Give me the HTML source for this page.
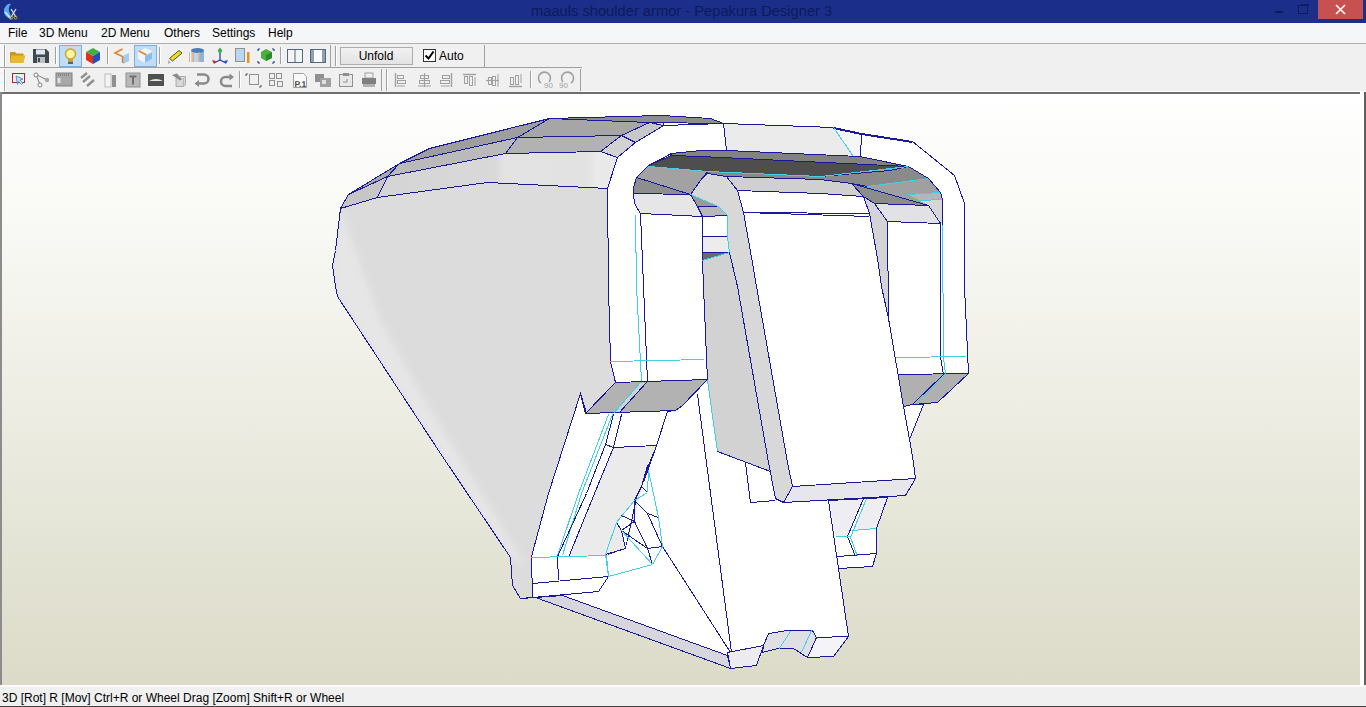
<!DOCTYPE html>
<html><head><meta charset="utf-8">
<style>
*{margin:0;padding:0;box-sizing:border-box}
html,body{width:1366px;height:707px;overflow:hidden;background:#f0f0f0;font-family:"Liberation Sans",sans-serif;font-size:12px;color:#000}
.abs{position:absolute}
#title{left:0;top:0;width:1366px;height:23px;background:#1b2e8a}
#title .t{left:531px;top:3px;color:#0d1a5c;font-size:14.7px;white-space:nowrap}
#menu{left:0;top:23px;width:1366px;height:20px;background:#f5f6f7}
#menu span{position:absolute;top:3px;white-space:nowrap}
#tb1{left:0;top:43px;width:486px;height:24px;background:#f0f0f0}
#tb2{left:0;top:67px;width:582px;height:25px;background:#f0f0f0}
#canvas{left:0;top:91px;width:1366px;height:596px;background:linear-gradient(#ffffff 0%,#f6f6f1 30%,#e6e6d9 70%,#dcdbc8 100%)}
#status{left:0;top:687px;width:1366px;height:20px;background:#f0f0f0;border-bottom:1px solid #404040}
#status span{position:absolute;left:2px;top:4px;white-space:nowrap}
svg{position:absolute;left:0;top:0}
#title svg{position:absolute}
</style></head><body>
<div id="title" class="abs"><div class="t abs">maauls shoulder armor - Pepakura Designer 3</div>
<svg width="22" height="22" style="left:0;top:0" shape-rendering="auto"><path d="M4 9 q3 -6 7 -5 q-3 3 -2 7 q2 4 2 8 q-5 -1 -7 -6z" fill="#58a8f0"/><path d="M5 12 q3 3 6 7" stroke="#d8ecff" stroke-width="1.5" fill="none"/><path d="M11 9 l5 8 M16 9 l-5 8" stroke="#e0e8f0" stroke-width="1.2"/><circle cx="11.5" cy="17.5" r="1.5" fill="none" stroke="#b0a040"/><circle cx="15.5" cy="17.5" r="1.5" fill="none" stroke="#b0a040"/></svg>
<svg width="60" height="22" style="left:1270px;top:0" shape-rendering="crispEdges"><rect x="5" y="11" width="8" height="2" fill="#0c1a60"/><rect x="28.5" y="5.5" width="9" height="8" fill="none" stroke="#0c1a60" stroke-width="1.5"/><rect x="31" y="3.5" width="8" height="2" fill="#0c1a60"/></svg>
<div class="abs" style="left:1318px;top:0;width:45px;height:19px;background:#c75050"></div>
<svg width="45" height="19" style="left:1318px;top:0" shape-rendering="auto"><path d="M18 5 l9 9 M27 5 l-9 9" stroke="#fff" stroke-width="1.6"/></svg>
</div>
<div id="menu" class="abs">
<span style="left:8px">File</span><span style="left:39px">3D Menu</span><span style="left:101px">2D Menu</span><span style="left:164px">Others</span><span style="left:212px">Settings</span><span style="left:268px">Help</span>
</div>
<div id="canvas" class="abs"></div>
<div class="abs" style="left:0;top:92px;width:1366px;height:2px;background:#6e6e6e"></div>
<div class="abs" style="left:0;top:92px;width:2px;height:595px;background:#8c8c8c"></div>
<div class="abs" style="left:1360px;top:92px;width:6px;height:595px;background:#ffffff;border-right:2px solid #606060"></div>
<div class="abs" style="left:0;top:685px;width:1366px;height:2px;background:#fcfcfc"></div>
<svg width="1366" height="707" viewBox="0 0 1366 707" shape-rendering="crispEdges" stroke-width="1">
<defs>
<linearGradient id="gf5" gradientUnits="userSpaceOnUse" x1="377" y1="0" x2="618" y2="0"><stop offset="0" stop-color="#d4d4d4"/><stop offset="0.49" stop-color="#d9d9d9"/><stop offset="0.53" stop-color="#e3e3e3"/><stop offset="0.87" stop-color="#e2e2e2"/><stop offset="0.91" stop-color="#eaeaea"/><stop offset="1" stop-color="#e8e8e8"/></linearGradient>
<filter id="blur" x="-20%" y="-20%" width="140%" height="140%"><feGaussianBlur stdDeviation="3.5"/></filter>
<clipPath id="shclip"><polygon points="340,208.5 348.7,194.1 399.7,163.6 429.6,148.7 549.2,118.9 661.7,115.9 663.4,125.6 617.8,157.2 607.4,188 608.75,286 610,361 615,382.25 586.25,413.5 580,393.5 560,462.25 531.25,556.25 532.5,597.5 520,598.75 512.5,585 510,557.5 440,453.75 337.5,296 335,286 332.5,265 335,250"/></clipPath>
</defs>
<polygon points="340.5,208.5 348.5,194.5 399.5,163.5 429.5,148.5 549.5,118.5 661.5,115.5 663.5,125.5 617.5,157.5 607.5,188.5 608.5,286.5 610.5,361.5 615.5,382.5 586.5,413.5 580.5,393.5 560.5,462.5 531.5,556.5 532.5,597.5 520.5,598.5 512.5,585.5 510.5,557.5 440.5,453.5 337.5,296.5 335.5,286.5 332.5,265.5 335.5,250.5" fill="#dcdcdc" stroke="#18189c"/>
<g clip-path="url(#shclip)"><polygon points="340.5,208.5 341.5,210.5 378.5,316.5 415.5,384.5 525.5,565.5 510.5,557.5 440.5,453.5 337.5,296.5 335.5,286.5 332.5,265.5 335.5,250.5" fill="#e6e6e7" filter="url(#blur)"/></g>
<polygon points="348.5,194.5 399.5,163.5 387.5,176.5" fill="#a9a9a9" stroke="#18189c"/>
<polygon points="340.5,208.5 348.5,194.5 387.5,176.5 377.5,197.5" fill="#c6c6c6" stroke="#18189c"/>
<polygon points="399.5,163.5 429.5,148.5 549.5,118.5 517.5,137.5" fill="#9e9e9e" stroke="#18189c"/>
<polygon points="387.5,176.5 399.5,163.5 517.5,137.5 505.5,153.5" fill="#bababa" stroke="#18189c"/>
<polygon points="377.5,197.5 387.5,176.5 505.5,153.5 600.5,151.5 617.5,157.5 607.5,188.5 487.5,182.5" fill="url(#gf5)" stroke="#18189c"/>
<polygon points="549.5,118.5 661.5,115.5 710.5,118.5 723.5,123.5 649.5,122.5" fill="#8e8e8e" stroke="#18189c"/>
<polygon points="549.5,118.5 649.5,122.5 621.5,135.5 517.5,137.5" fill="#a6a6a6" stroke="#18189c"/>
<polygon points="517.5,137.5 621.5,135.5 600.5,151.5 505.5,153.5" fill="#b2b2b2" stroke="#18189c"/>
<polygon points="649.5,122.5 663.5,125.5 635.5,142.5 621.5,135.5" fill="#c8c8c8" stroke="#18189c"/>
<polygon points="621.5,135.5 635.5,142.5 617.5,157.5 600.5,151.5" fill="#d2d2d2" stroke="#18189c"/>
<polygon points="615.5,382.5 610.5,361.5 608.5,286.5 607.5,188.5 617.5,157.5 635.5,142.5 663.5,125.5 723.5,123.5 833.5,127.5 861.5,133.5 912.5,141.5 954.5,175.5 964.5,203.5 964.5,286.5 968.5,373.5 943.5,374.5 940.5,357.5 940.5,223.5 942.5,208.5 942.5,199.5 940.5,192.5 928.5,178.5 908.5,166.5 859.5,156.5 726.5,150.5 700.5,150.5 671.5,153.5 648.5,165.5 636.5,177.5 633.5,187.5 633.5,193.5 640.5,213.5 647.5,381.5" fill="#ffffff" stroke="#18189c"/>
<polygon points="723.5,123.5 833.5,127.5 853.5,156.5 726.5,150.5" fill="#ebebeb" stroke="#18189c"/>
<polygon points="833.5,127.5 861.5,133.5 860.5,156.5 853.5,156.5" fill="#f6f6f6" stroke="#18189c"/>
<polygon points="671.5,153.5 700.5,150.5 726.5,150.5 859.5,156.5 908.5,166.5 700.5,156.5 671.5,155.5" fill="#828282" stroke="#18189c"/>
<polygon points="648.5,165.5 671.5,155.5 700.5,156.5 908.5,166.5 820.5,176.5 707.5,171.5 649.5,166.5" fill="#4e4e4e" stroke="#18189c"/>
<polygon points="636.5,177.5 648.5,165.5 649.5,166.5 707.5,171.5 700.5,180.5 690.5,194.5" fill="#a2a2a2" stroke="#18189c"/>
<polygon points="633.5,187.5 636.5,177.5 690.5,194.5 633.5,193.5" fill="#8e8e8e" stroke="#18189c"/>
<polygon points="633.5,193.5 690.5,194.5 697.5,206.5 702.5,216.5 640.5,213.5 634.5,203.5" fill="#e6e6e6" stroke="#18189c"/>
<polygon points="707.5,171.5 820.5,176.5 908.5,166.5 928.5,178.5 940.5,192.5 942.5,199.5 942.5,224.5 928.5,205.5 874.5,203.5 863.5,196.5 851.5,183.5 820.5,179.5 726.5,176.5 707.5,173.5" fill="#a0a0a0" stroke="none"/>
<polygon points="707.5,171.5 820.5,176.5 889.5,170.5 908.5,166.5 928.5,178.5 867.5,186.5 851.5,183.5 820.5,179.5 726.5,176.5 707.5,173.5" fill="#8a8a8a" stroke="#18189c"/>
<polygon points="867.5,186.5 928.5,178.5 940.5,192.5 907.5,194.5" fill="#a0a0a0" stroke="none"/>
<polygon points="907.5,194.5 940.5,192.5 942.5,199.5 919.5,200.5" fill="#b6b6b6" stroke="none"/>
<polygon points="919.5,200.5 942.5,199.5 942.5,224.5 928.5,205.5" fill="#d6d6d6" stroke="none"/>
<polygon points="851.5,183.5 928.5,205.5 874.5,203.5 863.5,196.5" fill="#8c8c8c" stroke="#18189c"/>
<polygon points="874.5,203.5 928.5,205.5 940.5,223.5 887.5,221.5" fill="#e2e2e6" stroke="#18189c"/>
<polygon points="726.5,176.5 820.5,179.5 851.5,183.5 863.5,196.5 820.5,193.5 737.5,190.5" fill="#d0d0d0" stroke="#18189c"/>
<polygon points="737.5,190.5 820.5,193.5 863.5,196.5 869.5,213.5 743.5,212.5" fill="#ffffff" stroke="#18189c"/>
<polygon points="863.5,196.5 874.5,203.5 887.5,221.5 888.5,318.5 881.5,286.5 877.5,258.5 869.5,213.5" fill="#d4d4d4" stroke="#18189c"/>
<polygon points="887.5,221.5 940.5,223.5 940.5,357.5 943.5,374.5 897.5,374.5 888.5,318.5" fill="#ffffff" stroke="#18189c"/>
<polygon points="897.5,374.5 968.5,373.5 937.5,402.5 912.5,404.5 903.5,406.5" fill="#b0b0b0" stroke="#18189c"/>
<polygon points="903.5,406.5 912.5,404.5 923.5,404.5 909.5,439.5" fill="#ffffff" stroke="#18189c"/>
<polygon points="640.5,213.5 702.5,216.5 707.5,380.5 647.5,381.5" fill="#ffffff" stroke="#18189c"/>
<polygon points="615.5,382.5 707.5,379.5 682.5,405.5 675.5,410.5 585.5,413.5" fill="#b2b2b2" stroke="#18189c"/>
<polygon points="640.5,382.5 646.5,382.5 618.5,413.5 613.5,413.5" fill="#d2d2d2" stroke="none"/>
<polygon points="690.5,194.5 718.5,206.5 697.5,206.5" fill="#9a9a9a" stroke="#18189c"/>
<polygon points="697.5,206.5 718.5,206.5 727.5,215.5 702.5,216.5" fill="#b8b8b8" stroke="#18189c"/>
<polygon points="702.5,216.5 727.5,215.5 727.5,236.5 702.5,236.5" fill="#ffffff" stroke="#18189c"/>
<polygon points="702.5,236.5 727.5,236.5 729.5,252.5 702.5,252.5" fill="#ececec" stroke="#18189c"/>
<polygon points="702.5,252.5 729.5,252.5 702.5,260.5" fill="#6a6a6a" stroke="#18189c"/>
<polygon points="702.5,260.5 729.5,252.5 737.5,286.5 768.5,462.5 770.5,471.5 717.5,451.5 707.5,380.5 703.5,286.5" fill="#d2d2d2" stroke="#18189c"/>
<polygon points="585.5,413.5 675.5,410.5 667.5,411.5 656.5,445.5 637.5,493.5 625.5,548.5 606.5,555.5 608.5,576.5 598.5,591.5 532.5,597.5 531.5,556.5 548.5,493.5 580.5,393.5" fill="#ffffff" stroke="#18189c"/>
<polygon points="613.5,447.5 656.5,445.5 647.5,465.5 641.5,486.5 634.5,500.5 616.5,522.5 621.5,530.5 625.5,548.5 605.5,554.5 568.5,557.5 594.5,493.5" fill="#ebebeb" stroke="none"/>
<polygon points="676.5,411.5 707.5,380.5 717.5,451.5 770.5,471.5 775.5,500.5 783.5,502.5 828.5,500.5 848.5,636.5 833.5,656.5 807.5,657.5 793.5,648.5 777.5,648.5 762.5,652.5 756.5,665.5 730.5,668.5 560.5,607.5 535.5,597.5 598.5,591.5 608.5,576.5 606.5,555.5 625.5,548.5 643.5,482.5 656.5,445.5 667.5,411.5" fill="#ffffff" stroke="none"/>
<polygon points="535.5,597.5 562.5,595.5 727.5,655.5 730.5,668.5" fill="#d6d6dc" stroke="#18189c"/>
<polygon points="727.5,652.5 763.5,645.5 756.5,665.5 730.5,668.5" fill="#ececf0" stroke="#18189c"/>
<polygon points="763.5,645.5 768.5,633.5 787.5,630.5 812.5,630.5 816.5,637.5 807.5,657.5 793.5,648.5 777.5,648.5 762.5,652.5" fill="#e0e0e4" stroke="#18189c"/>
<polygon points="816.5,637.5 848.5,636.5 833.5,656.5 807.5,657.5" fill="#f4f4f8" stroke="#18189c"/>
<polygon points="828.5,500.5 887.5,497.5 876.5,528.5 876.5,553.5 872.5,566.5 838.5,568.5" fill="#ffffff" stroke="#18189c"/>
<polygon points="829.5,500.5 863.5,498.5 847.5,536.5 835.5,536.5" fill="#eeeef2" stroke="none"/>
<polygon points="866.5,498.5 887.5,497.5 876.5,528.5 852.5,530.5" fill="#eeeef2" stroke="none"/>
<polygon points="690.5,194.5 700.5,180.5 707.5,173.5 726.5,176.5 737.5,190.5 743.5,212.5 753.5,268.5 756.5,286.5 787.5,462.5 792.5,486.5 783.5,502.5 775.5,498.5 768.5,462.5 737.5,286.5 729.5,252.5 727.5,236.5 727.5,215.5 718.5,206.5" fill="#d8d8d8" stroke="#18189c"/>
<polygon points="743.5,212.5 869.5,213.5 877.5,258.5 881.5,286.5 888.5,318.5 903.5,406.5 909.5,439.5 913.5,462.5 915.5,478.5 792.5,486.5 787.5,462.5 756.5,286.5 753.5,268.5" fill="#ffffff" stroke="#18189c"/>
<polygon points="792.5,486.5 915.5,478.5 905.5,495.5 783.5,502.5" fill="#e6e6ec" stroke="#18189c"/>
<polyline points="340.5,208.5 348.5,194.5 399.5,163.5 429.5,148.5 549.5,118.5 549.5,118.5" fill="none" stroke="#18189c"/>
<polyline points="340.5,208.5 335.5,250.5 332.5,265.5 335.5,286.5 337.5,296.5 440.5,453.5 510.5,557.5 512.5,585.5 520.5,598.5 535.5,597.5" fill="none" stroke="#18189c"/>
<polyline points="833.5,128.5 861.5,134.5 912.5,142.5" fill="none" stroke="#18189c"/>
<polyline points="833.5,127.5 853.5,156.5" fill="none" stroke="#40d0e6"/>
<polyline points="649.5,166.5 707.5,171.5 820.5,176.5 908.5,166.5" fill="none" stroke="#40d0e6"/>
<polyline points="867.5,186.5 928.5,178.5" fill="none" stroke="#40d0e6"/>
<polyline points="907.5,194.5 940.5,192.5" fill="none" stroke="#40d0e6"/>
<polyline points="919.5,200.5 942.5,199.5" fill="none" stroke="#40d0e6"/>
<polyline points="928.5,178.5 940.5,192.5 942.5,199.5 942.5,224.5" fill="none" stroke="#18189c"/>
<polyline points="743.5,212.5 869.5,216.5" fill="none" stroke="#18189c"/>
<polyline points="942.5,225.5 943.5,357.5 945.5,374.5" fill="none" stroke="#40d0e6"/>
<polyline points="943.5,374.5 912.5,404.5" fill="none" stroke="#18189c"/>
<polyline points="945.5,374.5 915.5,404.5" fill="none" stroke="#40d0e6"/>
<polyline points="896.5,357.5 966.5,356.5" fill="none" stroke="#40d0e6"/>
<polyline points="909.5,439.5 913.5,462.5" fill="none" stroke="#18189c"/>
<polyline points="635.5,215.5 636.5,286.5 641.5,381.5" fill="none" stroke="#40d0e6"/>
<polyline points="634.5,203.5 640.5,213.5" fill="none" stroke="#18189c"/>
<polyline points="610.5,361.5 704.5,359.5" fill="none" stroke="#40d0e6"/>
<polyline points="646.5,382.5 618.5,413.5" fill="none" stroke="#18189c"/>
<polyline points="640.5,382.5 613.5,413.5" fill="none" stroke="#40d0e6"/>
<polyline points="702.5,260.5 729.5,252.5" fill="none" stroke="#40d0e6"/>
<polyline points="690.5,194.5 718.5,206.5 727.5,215.5 727.5,236.5 729.5,252.5" fill="none" stroke="#40d0e6"/>
<polyline points="707.5,380.5 717.5,451.5" fill="none" stroke="#40d0e6"/>
<polyline points="580.5,393.5 548.5,493.5 531.5,556.5 532.5,597.5" fill="none" stroke="#18189c"/>
<polyline points="608.5,414.5 578.5,493.5 557.5,555.5" fill="none" stroke="#40d0e6"/>
<polyline points="612.5,414.5 581.5,493.5 562.5,555.5" fill="none" stroke="#40d0e6"/>
<polyline points="613.5,414.5 605.5,444.5 586.5,493.5 557.5,556.5 558.5,580.5" fill="none" stroke="#18189c"/>
<polyline points="621.5,414.5 613.5,447.5 594.5,493.5 568.5,557.5" fill="none" stroke="#18189c"/>
<polyline points="605.5,444.5 613.5,447.5 656.5,445.5" fill="none" stroke="#18189c"/>
<polyline points="667.5,411.5 656.5,445.5 643.5,482.5" fill="none" stroke="#18189c"/>
<polyline points="531.5,557.5 606.5,555.5 608.5,576.5" fill="none" stroke="#40d0e6"/>
<polyline points="532.5,583.5 608.5,576.5" fill="none" stroke="#18189c"/>
<polyline points="532.5,597.5 598.5,591.5 608.5,576.5" fill="none" stroke="#18189c"/>
<polyline points="697.5,394.5 731.5,652.5" fill="none" stroke="#18189c"/>
<polyline points="662.5,546.5 730.5,652.5" fill="none" stroke="#18189c"/>
<polyline points="745.5,462.5 750.5,502.5 775.5,500.5" fill="none" stroke="#18189c"/>
<polyline points="717.5,451.5 770.5,471.5" fill="none" stroke="#18189c"/>
<polyline points="790.5,631.5 778.5,649.5" fill="none" stroke="#40d0e6"/>
<polyline points="811.5,630.5 801.5,652.5" fill="none" stroke="#40d0e6"/>
<polyline points="828.5,500.5 848.5,636.5" fill="none" stroke="#18189c"/>
<polyline points="647.5,465.5 641.5,486.5 634.5,500.5 634.5,521.5" fill="none" stroke="#18189c"/>
<polyline points="641.5,486.5 647.5,492.5" fill="none" stroke="#18189c"/>
<polyline points="634.5,500.5 647.5,513.5 662.5,546.5" fill="none" stroke="#18189c"/>
<polyline points="647.5,513.5 658.5,517.5" fill="none" stroke="#18189c"/>
<polyline points="621.5,515.5 634.5,521.5 621.5,530.5" fill="none" stroke="#18189c"/>
<polyline points="616.5,522.5 621.5,530.5 625.5,548.5 605.5,554.5" fill="none" stroke="#18189c"/>
<polyline points="621.5,530.5 647.5,548.5" fill="none" stroke="#18189c"/>
<polyline points="634.5,521.5 647.5,548.5 662.5,546.5" fill="none" stroke="#18189c"/>
<polyline points="647.5,548.5 652.5,564.5" fill="none" stroke="#18189c"/>
<polyline points="648.5,470.5 658.5,517.5 662.5,546.5 652.5,564.5 608.5,576.5 605.5,554.5 616.5,522.5 634.5,500.5 647.5,492.5 648.5,470.5" fill="none" stroke="#40d0e6"/>
<polyline points="621.5,530.5 652.5,564.5" fill="none" stroke="#40d0e6"/>
<polyline points="863.5,498.5 847.5,536.5 855.5,556.5" fill="none" stroke="#18189c"/>
<polyline points="866.5,498.5 850.5,537.5 857.5,556.5" fill="none" stroke="#40d0e6"/>
<polyline points="835.5,536.5 850.5,536.5" fill="none" stroke="#40d0e6"/>
<polyline points="852.5,530.5 876.5,528.5" fill="none" stroke="#40d0e6"/>
<polyline points="837.5,556.5 876.5,553.5" fill="none" stroke="#18189c"/>
<polyline points="828.5,500.5 887.5,497.5 876.5,528.5 876.5,553.5 872.5,566.5 838.5,568.5" fill="none" stroke="#18189c"/>
<polyline points="903.5,406.5 912.5,404.5" fill="none" stroke="#18189c"/>
<g shape-rendering="geometricPrecision"><rect x="0" y="43" width="486" height="24" fill="#f0f0f0"/>
<rect x="0" y="43" width="4" height="24" fill="#f8f8f8"/>
<line x1="0" y1="43.5" x2="1366" y2="43.5" stroke="#b0b0b0"/>
<line x1="0" y1="67.5" x2="486" y2="67.5" stroke="#a0a0a0"/>
<line x1="4.5" y1="45" x2="4.5" y2="67" stroke="#a0a0a0"/><line x1="5.5" y1="45" x2="5.5" y2="67" stroke="#ffffff"/>
<line x1="484.5" y1="45" x2="484.5" y2="67" stroke="#a0a0a0"/>
<line x1="55.5" y1="47" x2="55.5" y2="64" stroke="#a0a0a0"/><line x1="56.5" y1="47" x2="56.5" y2="64" stroke="#fff"/>
<line x1="107.5" y1="47" x2="107.5" y2="64" stroke="#a0a0a0"/><line x1="108.5" y1="47" x2="108.5" y2="64" stroke="#fff"/>
<line x1="159.5" y1="47" x2="159.5" y2="64" stroke="#a0a0a0"/><line x1="160.5" y1="47" x2="160.5" y2="64" stroke="#fff"/>
<line x1="280.5" y1="47" x2="280.5" y2="64" stroke="#a0a0a0"/><line x1="281.5" y1="47" x2="281.5" y2="64" stroke="#fff"/>
<line x1="330.5" y1="45" x2="330.5" y2="67" stroke="#a0a0a0"/><line x1="335.5" y1="46" x2="335.5" y2="66" stroke="#a0a0a0"/><line x1="336.5" y1="46" x2="336.5" y2="66" stroke="#fff"/>
<rect x="59.5" y="45.5" width="22" height="21" fill="#c0dcf6" stroke="#7eaede"/>
<rect x="134.5" y="45.5" width="22" height="21" fill="#c0dcf6" stroke="#7eaede"/>
<path d="M10 52 h5 l1.5 1.5 h7 v9 h-13.5z" fill="#c89a18"/><path d="M11.5 55.5 h14 l-2.5 7.5 h-13z" fill="#e8b830"/>
<path d="M33 49 h13 l3 3 v11 h-16z" fill="#404850"/><rect x="36" y="49.5" width="9" height="5" fill="#dde8f0"/><rect x="37" y="57" width="8" height="6" fill="#b8c0c8"/><rect x="38" y="58" width="2" height="4" fill="#404850"/>
<circle cx="70.5" cy="54" r="5" fill="#fff6a0" stroke="#d8a020" stroke-width="1.5"/><rect x="68" y="59" width="5" height="3" fill="#c0a040"/><rect x="68" y="62" width="5" height="2" fill="#606060"/>
<path d="M86 52 l7 -4 l7 4 l-7 4z" fill="#40b040"/><path d="M86 52 v8 l7 4 v-8z" fill="#e03020"/><path d="M100 52 v8 l-7 4 v-8z" fill="#2050c0"/>
<path d="M115 53 l8 -4 l6 3 v8 l-6 3 l-8 -4z" fill="#e6f2fb"/><path d="M123 56 l6 -3 v8 l-6 3z" fill="#a0ccf2"/><path d="M122.5 49 l-7.5 4 l7.5 3.5 v6.5" stroke="#f08020" stroke-width="1.6" fill="none"/>
<path d="M138 52 l7 -4 l7 3 v8 l-7 4 l-7 -4z" fill="#eef6fc"/><path d="M145 56 l7 -4 v7 l-7 4z" fill="#8cbcee"/><path d="M139 51 l7.5 4" stroke="#f08020" stroke-width="1.8" fill="none"/>
<path d="M169.5 58.5 l9.5 -8 l3 2.5 l-9.5 8z" fill="#f0e020" stroke="#404010" stroke-width="0.9"/><path d="M168 60 l3 2.5 l-3 1.5z" fill="#b8b0c8"/>
<rect x="191" y="50" width="13" height="12" fill="#b8d8f2"/><rect x="200" y="50" width="4" height="12" fill="#8ab4dc"/><ellipse cx="197.5" cy="50.5" rx="6.5" ry="2.5" fill="#4a7cc0"/><rect x="189" y="52" width="1" height="10" fill="#f0b070"/><rect x="192.5" y="52" width="1.4" height="10" fill="#f0a860"/><rect x="198.5" y="52" width="1.4" height="10" fill="#e8a070"/>
<path d="M220 51 v9 l-6 3 M220 60 l6 3" stroke="#2030a0" stroke-width="1.2" fill="none"/><path d="M217.5 51 l2.5 -3.5 l2.5 3.5z" fill="#30a040"/><circle cx="220" cy="51" r="2" fill="#40b050"/><path d="M212 60 l4 1 l-2 3z" fill="#e02020"/><path d="M228 60 l-4 1 l2 3z" fill="#2050d0"/>
<rect x="235.5" y="48.5" width="9" height="13" fill="#b8d8f0" stroke="#909090"/><rect x="247" y="52" width="2.5" height="11" fill="#f0901c"/>
<path d="M258 49 h2 M258 49 v2 M274 49 h-2 M274 49 v2 M258 63 h2 M258 63 v-2 M274 63 h-2 M274 63 v-2" stroke="#1840a0" stroke-width="1.2"/><path d="M261 52 l5 -3 l6 3 v6 l-6 3 l-5 -3z" fill="#48b040"/><path d="M266 55 l6 -3 v6 l-6 3z" fill="#2e8a2a"/>
<rect x="287.5" y="49.5" width="15" height="13" fill="#f4f4f4" stroke="#506880"/><line x1="295" y1="50" x2="295" y2="62" stroke="#506880"/>
<rect x="310.5" y="49.5" width="15" height="13" fill="#fbfbfb" stroke="#506880"/><rect x="311" y="50" width="3" height="12" fill="#90a0b0"/><rect x="322" y="50" width="3" height="12" fill="#90a0b0"/>
<defs><linearGradient id="bg1" x1="0" y1="0" x2="0" y2="1"><stop offset="0" stop-color="#f2f2f2"/><stop offset="1" stop-color="#e2e2e2"/></linearGradient></defs>
<rect x="340.5" y="47.5" width="72" height="17" fill="url(#bg1)" stroke="#acacac"/>
<text x="376" y="60" text-anchor="middle" font-size="12" fill="#000">Unfold</text>
<rect x="423.5" y="49.5" width="12" height="12" fill="#fff" stroke="#333"/><path d="M425.5 55.5 l3 3 l5 -7" stroke="#000" stroke-width="2" fill="none"/>
<text x="439" y="60" font-size="12" fill="#000">Auto</text><rect x="0" y="68" width="582" height="24" fill="#f0f0f0"/>
<rect x="0" y="68" width="4" height="24" fill="#f8f8f8"/>
<line x1="4.5" y1="69" x2="4.5" y2="91" stroke="#a0a0a0"/><line x1="5.5" y1="69" x2="5.5" y2="91" stroke="#fff"/>
<line x1="381.5" y1="69" x2="381.5" y2="91" stroke="#a0a0a0"/>
<line x1="386.5" y1="69" x2="386.5" y2="91" stroke="#a0a0a0"/><line x1="387.5" y1="69" x2="387.5" y2="91" stroke="#fff"/>
<line x1="580.5" y1="69" x2="580.5" y2="91" stroke="#a0a0a0"/>
<line x1="486" y1="67.5" x2="582" y2="67.5" stroke="#a0a0a0"/>
<line x1="239.5" y1="71" x2="239.5" y2="88" stroke="#a0a0a0"/><line x1="240.5" y1="71" x2="240.5" y2="88" stroke="#fff"/>
<line x1="530.5" y1="71" x2="530.5" y2="88" stroke="#a0a0a0"/><line x1="531.5" y1="71" x2="531.5" y2="88" stroke="#fff"/>
<rect x="12.5" y="73.5" width="12" height="9" fill="none" stroke="#b02030"/><path d="M16 76 l7 3 l-3 1 l3 3 l-1.5 1.5 l-3 -3 l-1 3z" fill="#c0dcf4" stroke="#4080c0" stroke-width="0.8"/>
<path d="M36 75 l3.5 8 M37 75 l10 5" stroke="#606060" stroke-width="0.8"/><circle cx="36" cy="75" r="2" fill="#fff" stroke="#808080"/><circle cx="40" cy="85" r="2" fill="#fff" stroke="#808080"/><circle cx="47" cy="80" r="2.2" fill="#a8a8a8"/>
<rect x="56" y="73" width="16" height="13" fill="#a8a8a8" stroke="#808080"/><path d="M58 75 h12" stroke="#606060" stroke-dasharray="1 1"/><rect x="57.5" y="78" width="3" height="5" fill="#e0e0e0"/>
<path d="M81 78 l6 -5 M83 82 l7 -6 M87 86 l7 -6" stroke="#909090" stroke-width="2.4"/>
<rect x="105" y="74" width="6" height="13" fill="#f4f4f4" stroke="#b0b0b0" stroke-width="0.8"/><rect x="112" y="75" width="4" height="12" fill="#909090"/>
<rect x="126" y="73" width="14" height="14" fill="#b8b8b8" stroke="#909090"/><path d="M129.5 76.5 h7 M133 76.5 v8" stroke="#707070" stroke-width="2"/>
<rect x="148" y="74" width="16" height="12" fill="#505050"/><path d="M149 81 q7 -4 14 0 z" fill="#e8e8e8"/>
<path d="M176 78 l2.5 -1.5 h7 v8.5 l-2.5 1.5 h-7z" fill="#d8d8d8" stroke="#a0a0a0" stroke-width="0.8"/><path d="M183.5 78 v8.5" stroke="#b0b0b0" stroke-width="0.8"/><path d="M172 75 l5 -1.5 l5 6 l-2 1z" fill="#8a8a8a"/>
<path d="M197 74.5 h7 a4.5 4.5 0 0 1 0 9 h-6" stroke="#8a8a8a" stroke-width="2.6" fill="none"/><path d="M194.5 83.5 l4.5 -3.5 v7z" fill="#8a8a8a"/>
<path d="M231.5 77 h-6 a4.5 4.5 0 0 0 0 9 h6.5" stroke="#8a8a8a" stroke-width="2.6" fill="none"/><path d="M234 77 l-4.5 -3.5 v7z" fill="#8a8a8a"/>
<rect x="249.5" y="74.5" width="9" height="10" fill="#f0f0f0" stroke="#909090"/><path d="M246 74 v2 M246 74 h2 M261 87 v-2 M261 87 h-2" stroke="#606060" stroke-width="1.2"/>
<rect x="269.5" y="73.5" width="5" height="5" fill="#f0f0f0" stroke="#909090"/><rect x="276.5" y="73.5" width="5" height="5" fill="#f0f0f0" stroke="#909090"/><rect x="269.5" y="80.5" width="5" height="5" fill="#f0f0f0" stroke="#909090"/><rect x="277.5" y="81.5" width="5" height="5" fill="#f0f0f0" stroke="#909090"/>
<path d="M293.5 73.5 h10 l3 3 v11 h-13z" fill="#f8f8f8" stroke="#a0a0a0"/><text x="294.5" y="86.5" font-size="8.5" font-weight="bold" fill="#484848" style="text-rendering:geometricPrecision">P.1</text>
<rect x="315" y="74" width="9" height="8" fill="#909090"/><rect x="320" y="78" width="11" height="9" fill="#a0a0a0"/><rect x="322" y="80" width="4" height="4" fill="#e0e0e0"/>
<rect x="339.5" y="74.5" width="13" height="12" fill="#e8e8e8" stroke="#909090"/><rect x="343" y="73" width="6" height="3" fill="#909090"/><path d="M343 82 h4 v-3" stroke="#909090" fill="none"/>
<rect x="365" y="73" width="8" height="5" fill="#f0f0f0" stroke="#909090" stroke-width="0.8"/><rect x="362" y="78" width="14" height="6" fill="#808080"/><rect x="363" y="84" width="12" height="3" fill="#b0b0b0"/>
<path d="M395.5 73 v14" stroke="#a0a0a0" stroke-width="1.4"/><rect x="397.5" y="75.5" width="6" height="3" fill="none" stroke="#a0a0a0"/><rect x="397.5" y="80.5" width="8" height="3" fill="none" stroke="#a0a0a0"/><path d="M397 86 h8" stroke="#a0a0a0"/>
<path d="M424.5 73 v14" stroke="#a0a0a0" stroke-width="1.2"/><rect x="420.5" y="75.5" width="8" height="3" fill="none" stroke="#a0a0a0"/><rect x="419.5" y="80.5" width="10" height="3" fill="none" stroke="#a0a0a0"/><path d="M418 86 h13" stroke="#a0a0a0"/>
<path d="M451.5 73 v14" stroke="#a0a0a0" stroke-width="1.4"/><rect x="442.5" y="75.5" width="7" height="3" fill="none" stroke="#a0a0a0"/><rect x="440.5" y="80.5" width="9" height="3" fill="none" stroke="#a0a0a0"/><path d="M441 86 h9" stroke="#a0a0a0"/>
<path d="M463 74.5 h13" stroke="#a0a0a0" stroke-width="1.4"/><rect x="464.5" y="76.5" width="3" height="7" fill="none" stroke="#a0a0a0"/><rect x="469.5" y="76.5" width="3" height="9" fill="none" stroke="#a0a0a0"/><path d="M475 77 v9" stroke="#a0a0a0"/>
<path d="M486 80.5 h13" stroke="#a0a0a0" stroke-width="1.2"/><rect x="488.5" y="77.5" width="3" height="7" fill="none" stroke="#a0a0a0"/><rect x="492.5" y="76.5" width="3" height="9" fill="none" stroke="#a0a0a0"/><path d="M498 74 v13" stroke="#a0a0a0"/>
<path d="M509 86.5 h13" stroke="#a0a0a0" stroke-width="1.4"/><rect x="510.5" y="77.5" width="3" height="7" fill="none" stroke="#a0a0a0"/><rect x="515.5" y="75.5" width="3" height="9" fill="none" stroke="#a0a0a0"/><path d="M521 74 v9" stroke="#a0a0a0"/>
<path d="M541 83 a6 6 0 1 1 8 -1" stroke="#a0a0a0" stroke-width="1.6" fill="none"/><text x="544" y="88" font-size="8" fill="#a0a0a0">90</text>
<path d="M571 83 a6 6 0 1 0 -8 -1" stroke="#a0a0a0" stroke-width="1.6" fill="none"/><text x="559" y="88" font-size="8" fill="#a0a0a0">90</text></g>
</svg>
<div id="status" class="abs"><span>3D [Rot] R [Mov] Ctrl+R or Wheel Drag [Zoom] Shift+R or Wheel</span></div>
</body></html>
